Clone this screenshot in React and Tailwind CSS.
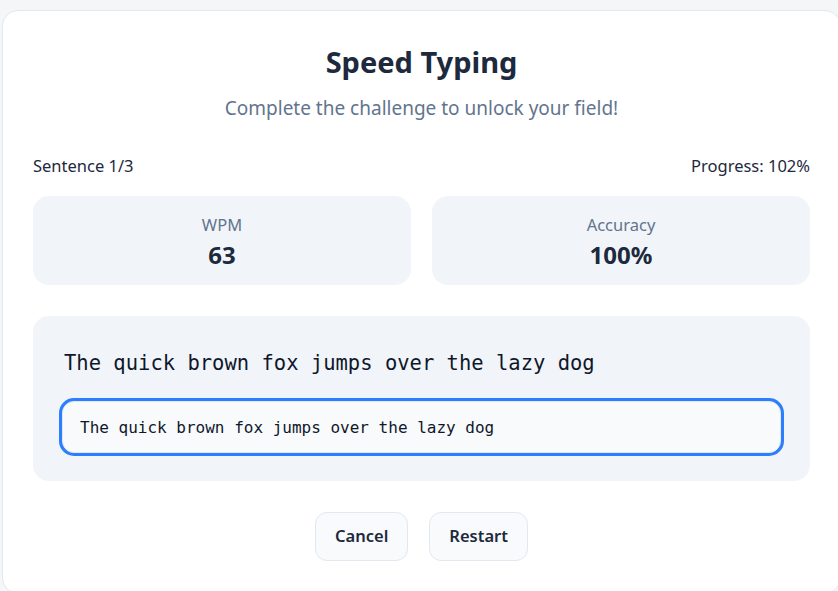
export default function App() {
  const sentence = "The quick brown fox jumps over the lazy dog"

  return (
    <div className="min-h-screen overflow-hidden bg-[#f5f6f8] font-['Noto_Sans',sans-serif]">
      <div className="ml-[2px] mt-[10px] w-[839px] rounded-2xl border border-slate-200 bg-white px-[30px] pt-[33px] pb-8">
        {/* Header */}
        <h1 className="text-center text-[29px] font-bold leading-9 text-slate-800">Speed Typing</h1>
        <p className="mt-[14px] text-center text-[19px] leading-7 text-slate-500">
          Complete the challenge to unlock your field!
        </p>

        {/* Status row */}
        <div className="mt-8 flex justify-between text-[16.5px] leading-6 text-slate-800">
          <span>Sentence 1/3</span>
          <span>Progress: 102%</span>
        </div>

        {/* Stats */}
        <div className="mt-[18px] grid grid-cols-2 gap-[21px]">
          <div className="rounded-2xl bg-slate-100 pt-[17px] pb-[14px] text-center">
            <div className="text-[16.5px] leading-6 text-slate-500">WPM</div>
            <div className="mt-[2px] text-[24px] font-bold leading-8 text-slate-800">63</div>
          </div>
          <div className="rounded-2xl bg-slate-100 pt-[17px] pb-[14px] text-center">
            <div className="text-[16.5px] leading-6 text-slate-500">Accuracy</div>
            <div className="mt-[2px] text-[24px] font-bold leading-8 text-slate-800">100%</div>
          </div>
        </div>

        {/* Typing area */}
        <div className="mt-[31px] rounded-2xl bg-slate-100 px-[29px] pt-[33px] pb-[28px]">
          <p className="pl-[2px] font-['DejaVu_Sans_Mono',monospace] text-[20.5px] leading-7 text-slate-900">{sentence}</p>
          <input
            type="text"
            defaultValue={sentence}
            className="mt-6 h-[52px] w-full rounded-xl border border-slate-200 bg-slate-50 px-[17px] font-['DejaVu_Sans_Mono',monospace] text-[16px] text-slate-900 outline-none ring-[3px] ring-blue-500"
          />
        </div>

        {/* Actions */}
        <div className="mt-[31px] flex justify-center gap-[21px]">
          <button className="h-[49px] rounded-xl border border-slate-200 bg-slate-50 px-[19px] text-[16.5px] font-semibold text-slate-800">
            Cancel
          </button>
          <button className="h-[49px] rounded-xl border border-slate-200 bg-slate-50 px-[19px] text-[16.5px] font-semibold text-slate-800">
            Restart
          </button>
        </div>
      </div>
    </div>
  )
}
